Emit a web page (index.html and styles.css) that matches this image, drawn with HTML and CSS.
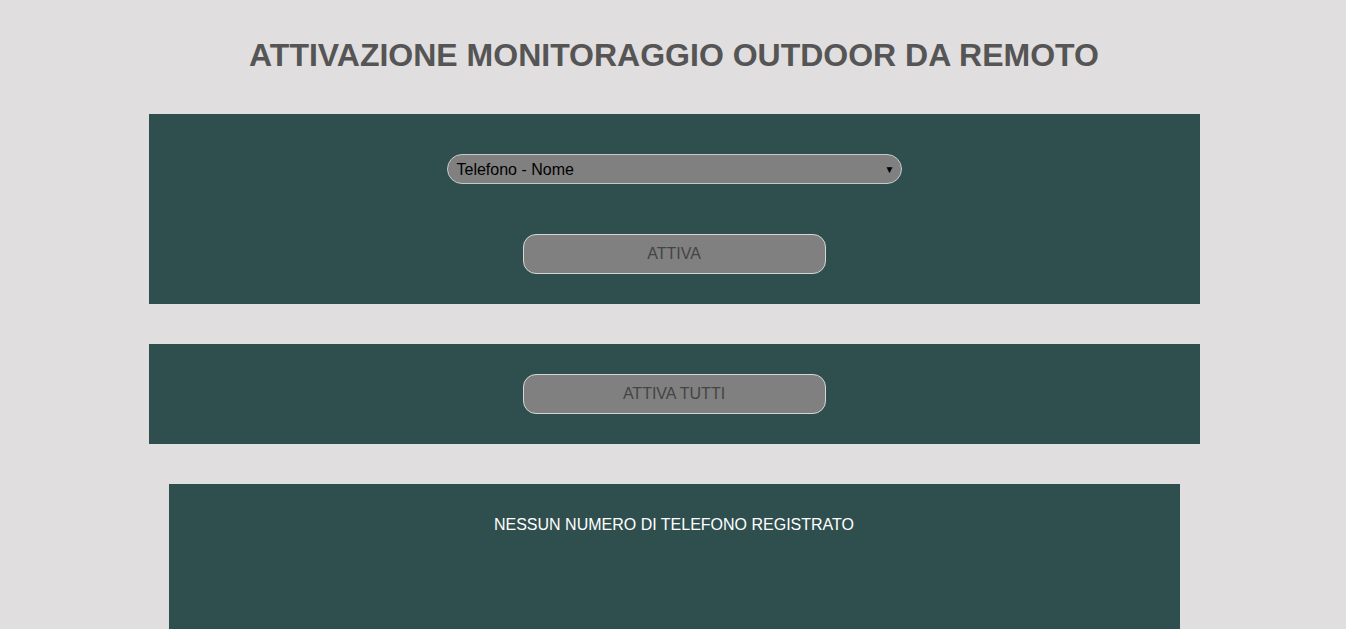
FILE: index.html
```html
<!DOCTYPE html>
<html lang="it">
<head>
<meta charset="utf-8">
<title>Attivazione monitoraggio outdoor</title>
<link rel="stylesheet" href="styles.css">
</head>
<body>
<h1 class="title">ATTIVAZIONE MONITORAGGIO OUTDOOR DA REMOTO</h1>
<section class="panel panel-single">
  <div class="select-wrap">
    <span class="select-text">Telefono - Nome</span>
    <span class="select-arrow">▼</span>
  </div>
  <button class="btn">ATTIVA</button>
</section>
<section class="panel panel-all">
  <button class="btn">ATTIVA TUTTI</button>
</section>
<section class="panel-list">
  <p class="empty">NESSUN NUMERO DI TELEFONO REGISTRATO</p>
</section>
</body>
</html>
```
FILE: styles.css
```css
html, body {
  margin: 0;
  padding: 0;
  background: #e0dede;
  font-family: "Liberation Sans", Arial, sans-serif;
  height: 629px;
  overflow: hidden;
}
body {
  display: flex;
  flex-direction: column;
  align-items: center;
  padding-left: 2px;
  box-sizing: border-box;
}
.title {
  margin: 37px 0 0 0;
  height: 77px;
  font-size: 32px;
  line-height: 37px;
  font-weight: bold;
  color: #555555;
  text-align: center;
}
.panel {
  width: 1051px;
  background: #2f4f4f;
  display: flex;
  flex-direction: column;
  align-items: center;
  box-sizing: border-box;
}
.panel-single {
  height: 190px;
  padding-top: 40px;
}
.panel-all {
  margin-top: 40px;
  height: 100px;
  padding-top: 30px;
}
.select-wrap {
  width: 455px;
  height: 30px;
  box-sizing: border-box;
  border: 1px solid #c8c8c8;
  border-radius: 15px;
  background: #808080;
  display: flex;
  align-items: center;
  justify-content: space-between;
  padding: 1px 6px 0 9px;
  color: #000;
  font-size: 16px;
}
.select-arrow {
  font-size: 10px;
  color: #000;
}
.btn {
  width: 303px;
  height: 40px;
  box-sizing: border-box;
  border: 1px solid #d6d6d6;
  border-radius: 13px;
  background: #808080;
  color: #444;
  font-family: "Liberation Sans", Arial, sans-serif;
  font-size: 16px;
  padding: 0;
}
.panel-single .btn {
  margin-top: 50px;
}
.panel-list {
  margin-top: 40px;
  width: 1011px;
  flex: 1;
  background: #2f4f4f;
  display: flex;
  justify-content: center;
}
.empty {
  margin: 32px 0 0 0;
  color: #fff;
  font-size: 16px;
  line-height: 18px;
}
```
